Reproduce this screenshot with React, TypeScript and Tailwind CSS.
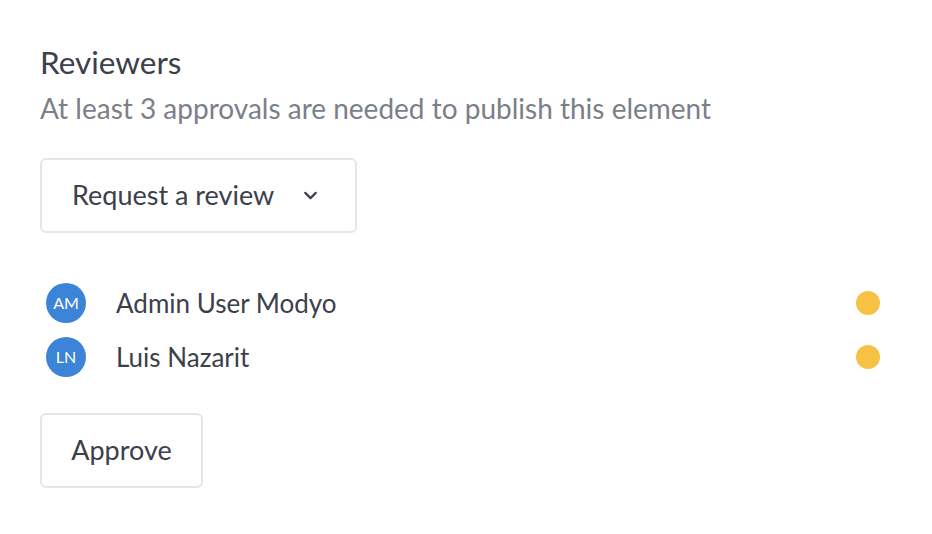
import { ChevronDown } from 'lucide-react';

const reviewers = [
  { initials: 'AM', name: 'Admin User Modyo' },
  { initials: 'LN', name: 'Luis Nazarit' },
];

export default function App() {
  return (
    <div className="min-h-screen bg-white pl-10 pr-[52px] pt-[42px] font-['Lato',sans-serif] text-[#3c404b]">
      {/* Header */}
      <h2 className="text-[31.5px] leading-[40px]">Reviewers</h2>
      <p className="mt-[9px] text-[28px] leading-[34px] text-[#7b8088]">
        At least 3 approvals are needed to publish this element
      </p>

      {/* Request dropdown */}
      <button className="mt-[33px] flex h-[75px] w-[317px] items-center justify-between rounded-md border-2 border-[#e6e6e6] pl-[30px] pr-[34px] text-[27px]">
        <span>Request a review</span>
        <ChevronDown size={21} strokeWidth={2.5} />
      </button>

      {/* Reviewers list */}
      <ul className="mt-[50px] flex flex-col gap-[14px]">
        {reviewers.map((r) => (
          <li key={r.initials} className="flex h-[40px] items-center">
            <span className="ml-[6px] flex h-[40px] w-[40px] items-center justify-center rounded-full bg-[#3b84d8] text-[16px] text-white">
              {r.initials}
            </span>
            <span className="ml-[30px] flex-1 text-[26px]">{r.name}</span>
            <span className="h-[24px] w-[24px] rounded-full bg-[#f7c244]" />
          </li>
        ))}
      </ul>

      {/* Approve */}
      <button className="mt-[36px] flex h-[75px] w-[163px] items-center justify-center rounded-md border-2 border-[#e6e6e6] text-[27px]">
        Approve
      </button>
    </div>
  );
}
